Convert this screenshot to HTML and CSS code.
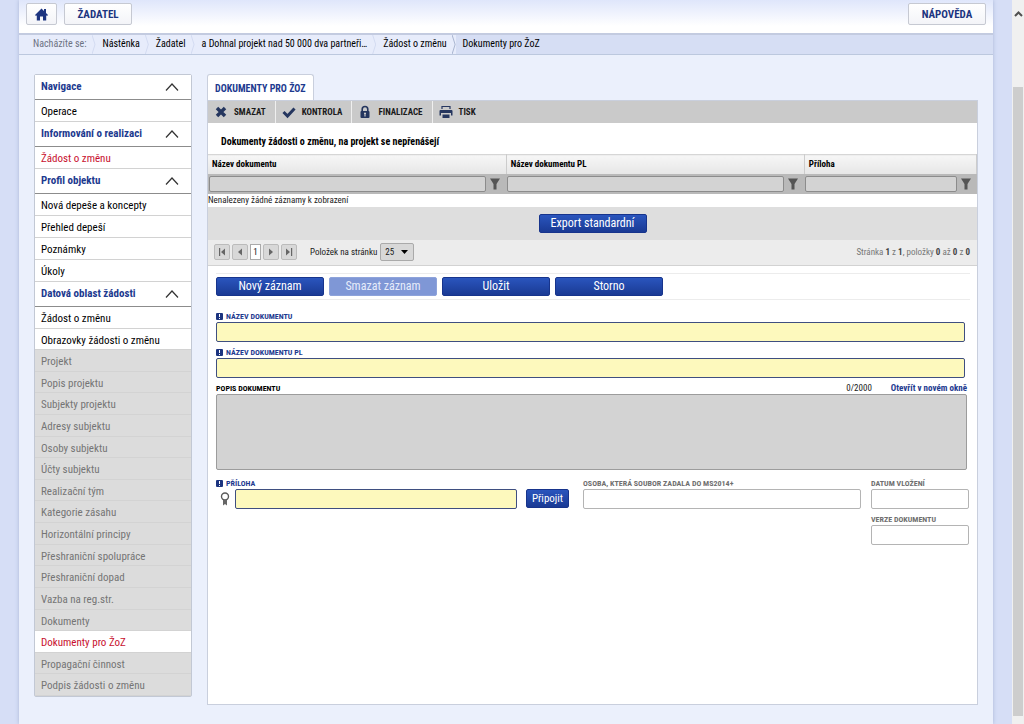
FILE: index.html
```html
<!DOCTYPE html>
<html lang="cs">
<head>
<meta charset="utf-8">
<title>Dokumenty pro ŽoZ</title>
<link rel="stylesheet" href="styles.css">
</head>
<body>
<div class="page">
  <header class="topbar">
    <button class="top-btn top-btn--home" type="button" aria-label="Domů">
      <svg width="13" height="13" viewBox="0 0 13 13"><path fill="#1c3480" d="M6.500 0.500L9 3V1h2v4l2 2-1 1-0.800-0.700V12.500H8V8.500H5v4H1.800V7.300L1 8 0 7z"/></svg>
    </button>
    <button class="top-btn top-btn--main" type="button">ŽADATEL</button>
    <button class="top-btn top-btn--help" type="button">NÁPOVĚDA</button>
  </header>
  <nav class="crumbs" aria-label="Drobečková navigace">
    <span class="crumb crumb--label">Nacházíte se:</span>
    <a class="crumb" href="#">Nástěnka</a>
    <a class="crumb" href="#">Žadatel</a>
    <a class="crumb" href="#">a Dohnal projekt nad 50 000 dva partneři…</a>
    <a class="crumb crumb--end" href="#">Žádost o změnu</a>
    <span class="crumb crumb--current">Dokumenty pro ŽoZ</span>
  </nav>
  <main class="main">
    <nav class="side" aria-label="Navigace">
      <button class="side-head" type="button">Navigace<svg width="14" height="8" viewBox="0 0 14 8"><path d="M1 7.500L7 1l6 6.500"/></svg></button>
      <ul class="side-list"><li><a href="#">Operace</a></li></ul>
      <button class="side-head" type="button">Informování o realizaci<svg width="14" height="8" viewBox="0 0 14 8"><path d="M1 7.500L7 1l6 6.500"/></svg></button>
      <ul class="side-list"><li class="is-active"><a href="#">Žádost o změnu</a></li></ul>
      <button class="side-head" type="button">Profil objektu<svg width="14" height="8" viewBox="0 0 14 8"><path d="M1 7.500L7 1l6 6.500"/></svg></button>
      <ul class="side-list">
        <li><a href="#">Nová depeše a koncepty</a></li>
        <li><a href="#">Přehled depeší</a></li>
        <li><a href="#">Poznámky</a></li>
        <li><a href="#">Úkoly</a></li>
      </ul>
      <button class="side-head" type="button">Datová oblast žádosti<svg width="14" height="8" viewBox="0 0 14 8"><path d="M1 7.500L7 1l6 6.500"/></svg></button>
      <ul class="side-list side-list--long">
        <li><a href="#">Žádost o změnu</a></li>
        <li><a href="#">Obrazovky žádosti o změnu</a></li>
        <li class="is-off"><a href="#">Projekt</a></li>
        <li class="is-off"><a href="#">Popis projektu</a></li>
        <li class="is-off"><a href="#">Subjekty projektu</a></li>
        <li class="is-off"><a href="#">Adresy subjektu</a></li>
        <li class="is-off"><a href="#">Osoby subjektu</a></li>
        <li class="is-off"><a href="#">Účty subjektu</a></li>
        <li class="is-off"><a href="#">Realizační tým</a></li>
        <li class="is-off"><a href="#">Kategorie zásahu</a></li>
        <li class="is-off"><a href="#">Horizontální principy</a></li>
        <li class="is-off"><a href="#">Přeshraniční spolupráce</a></li>
        <li class="is-off"><a href="#">Přeshraniční dopad</a></li>
        <li class="is-off"><a href="#">Vazba na reg.str.</a></li>
        <li class="is-off"><a href="#">Dokumenty</a></li>
        <li class="is-active"><a href="#">Dokumenty pro ŽoZ</a></li>
        <li class="is-off"><a href="#">Propagační činnost</a></li>
        <li class="is-off"><a href="#">Podpis žádosti o změnu</a></li>
      </ul>
    </nav>
    <section class="content">
      <h1 class="tab">DOKUMENTY PRO ŽOZ</h1>
      <div class="panel">
        <div class="tools">
          <button class="tool" type="button"><svg width="14" height="14" viewBox="0 0 14 14"><path d="M3 3l8 8M11 3l-8 8" stroke="#25365f" stroke-width="3.500"/></svg>SMAZAT</button>
          <button class="tool" type="button"><svg width="14" height="14" viewBox="0 0 14 14"><path d="M1.500 7l4 4L12.500 3.500" fill="none" stroke="#25365f" stroke-width="3"/></svg>KONTROLA</button>
          <button class="tool" type="button"><svg width="14" height="14" viewBox="0 0 14 14"><path d="M4.200 7V4.300a2.800 2.800 0 0 1 5.600 0V7" fill="none" stroke="#25365f" stroke-width="1.600"/><rect x="2.500" y="6" width="9" height="7" rx="1" fill="#25365f"/><path d="M7 7.500v4M6 8.500h2" stroke="#cacaca" stroke-width="1.200"/></svg>FINALIZACE</button>
          <button class="tool" type="button"><svg width="14" height="14" viewBox="0 0 14 14"><path d="M3 4V1.500h8V4" fill="none" stroke="#25365f" stroke-width="1.200"/><path fill="#25365f" d="M1.500 5h11a1 1 0 0 1 1 1v4.500H12V8H2v2.500H.5V6a1 1 0 0 1 1-1zM3.500 9.500h7V13h-7z"/></svg>TISK</button>
        </div>
        <h2 class="title">Dokumenty žádosti o změnu, na projekt se nepřenášejí</h2>
        <table class="grid">
          <thead>
            <tr><th class="col-wide">Název dokumentu</th><th class="col-wide">Název dokumentu PL</th><th>Příloha</th></tr>
          </thead>
          <tbody>
            <tr class="filters">
              <td><div class="filter"><input type="text" aria-label="Filtr Název dokumentu"><button type="button" aria-label="Filtrovat"><svg width="10" height="12" viewBox="0 0 10 12"><path d="M0 0.500h10L6.500 6v5.500h-3V6z"/></svg></button></div></td>
              <td><div class="filter"><input type="text" aria-label="Filtr Název dokumentu PL"><button type="button" aria-label="Filtrovat"><svg width="10" height="12" viewBox="0 0 10 12"><path d="M0 0.500h10L6.500 6v5.500h-3V6z"/></svg></button></div></td>
              <td><div class="filter"><input type="text" aria-label="Filtr Příloha"><button type="button" aria-label="Filtrovat"><svg width="10" height="12" viewBox="0 0 10 12"><path d="M0 0.500h10L6.500 6v5.500h-3V6z"/></svg></button></div></td>
            </tr>
            <tr><td class="empty" colspan="3">Nenalezeny žádné záznamy k zobrazení</td></tr>
          </tbody>
        </table>
        <div class="export"><button class="btn" type="button">Export standardní</button></div>
        <div class="pager">
          <div class="pages">
            <button class="page-btn" type="button" aria-label="První"><svg width="8" height="8" viewBox="0 0 8 8"><path d="M1 0h1.200v8H1zM7 0.500v7L3 4z"/></svg></button>
            <button class="page-btn" type="button" aria-label="Předchozí"><svg width="8" height="8" viewBox="0 0 8 8"><path d="M6 0.500v7L2 4z"/></svg></button>
            <span class="page-now">1</span>
            <button class="page-btn" type="button" aria-label="Další"><svg width="8" height="8" viewBox="0 0 8 8"><path d="M2 0.500v7L6 4z"/></svg></button>
            <button class="page-btn" type="button" aria-label="Poslední"><svg width="8" height="8" viewBox="0 0 8 8"><path d="M6 0h1.200v8H6zM1 0.500v7L5 4z"/></svg></button>
          </div>
          <label for="size">Položek na stránku</label>
          <div class="select"><select id="size"><option>25</option></select><svg width="7" height="4" viewBox="0 0 7 4"><path d="M0 0h7L3.500 4z"/></svg></div>
          <p class="range">Stránka <b>1</b> z <b>1</b>, položky <b>0</b> až <b>0</b> z <b>0</b></p>
        </div>
        <div class="actions">
          <button class="btn" type="button">Nový záznam</button>
          <button class="btn" type="button" disabled>Smazat záznam</button>
          <button class="btn" type="button">Uložit</button>
          <button class="btn" type="button">Storno</button>
        </div>
        <form class="form">
          <div class="field field--req">
            <label for="name"><svg width="7" height="7" viewBox="0 0 7 7"><rect width="7" height="7" rx="1" fill="#1c3480"/><path d="M3.500 1v3M3.500 5v1" stroke="#fff"/></svg>NÁZEV DOKUMENTU</label>
            <input id="name" type="text">
          </div>
          <div class="field field--req">
            <label for="namepl"><svg width="7" height="7" viewBox="0 0 7 7"><rect width="7" height="7" rx="1" fill="#1c3480"/><path d="M3.500 1v3M3.500 5v1" stroke="#fff"/></svg>NÁZEV DOKUMENTU PL</label>
            <input id="namepl" type="text">
          </div>
          <div class="field field--area">
            <div class="area-head"><label for="desc">POPIS DOKUMENTU</label><span class="count">0/2000</span><a href="#">Otevřít v novém okně</a></div>
            <textarea id="desc"></textarea>
          </div>
          <div class="row">
            <div class="field field--req field--file">
              <label for="file"><svg width="7" height="7" viewBox="0 0 7 7"><rect width="7" height="7" rx="1" fill="#1c3480"/><path d="M3.500 1v3M3.500 5v1" stroke="#fff"/></svg>PŘÍLOHA</label>
              <div class="file">
                <svg width="10" height="14" viewBox="0 0 10 14"><circle cx="5" cy="4.500" r="3.500" fill="none" stroke="#5a5a5a" stroke-width="1.400"/><path d="M3 8h4v5.500L5 12l-2 1.500z" fill="#666"/></svg>
                <input id="file" type="text">
                <button class="btn btn--small" type="button">Připojit</button>
              </div>
            </div>
            <div class="field field--person"><label for="person">OSOBA, KTERÁ SOUBOR ZADALA DO MS2014+</label><input id="person" type="text" readonly></div>
            <div class="stack">
              <div class="field"><label for="date">DATUM VLOŽENÍ</label><input id="date" type="text" readonly></div>
              <div class="field"><label for="ver">VERZE DOKUMENTU</label><input id="ver" type="text" readonly></div>
            </div>
          </div>
        </form>
      </div>
    </section>
  </main>
</div>
<div class="scroll" aria-hidden="true">
  <svg width="9" height="6" viewBox="0 0 9 6"><path d="M1 5l3.500-3.500L8 5"/></svg>
  <div class="thumb"></div>
</div>
</body>
</html>
```
FILE: styles.css
```css
* { box-sizing: border-box; }

body {
  margin: 0;
  min-height: 100vh;
  display: flex;
  background: #d6def6;
  color: #1a1a1a;
  font: 11px/14px "Roboto Condensed", "Liberation Sans Narrow", Roboto, sans-serif;
}

button, input, textarea, select { font: inherit; color: inherit; margin: 0; }
button { cursor: pointer; padding: 0; }
a { color: inherit; text-decoration: none; }
h1, h2, p, ul { margin: 0; padding: 0; }
ul { list-style: none; }

.page {
  flex: 1;
  min-width: 0;
  margin: 0 19px;
  display: flex;
  flex-direction: column;
  background: #ebf0fc;
  box-shadow: 0 0 4px #a9b6d6;
}

.topbar {
  display: flex;
  gap: 7px;
  height: 33px;
  padding: 3px 7px 8px;
  background: linear-gradient(#dfe6fb, #fff 26px);
}

.top-btn {
  padding-top: 2px;
  border: 1px solid #c6c9d2;
  border-radius: 2px;
  background: linear-gradient(#fff, #f3f4f8);
  color: #1c3480;
  font-weight: bold;
}
.top-btn svg { display: block; margin: 0 auto; }
.top-btn--home { width: 31px; padding-top: 0; }
.top-btn--main { width: 68px; }
.top-btn--help { width: 78px; margin-left: auto; }

.crumbs {
  display: flex;
  height: 22px;
  background: #d6def4;
  border-top: 2px solid #c3cbe0;
  border-bottom: 1px solid #bcc8de;
  font-size: 10px;
  line-height: 18px;
}
.crumb {
  display: flex;
  padding: 0 7px;
  background: #e7ecfb;
  color: #000;
}
.crumb--label { padding-left: 14px; color: #6d7383; }
.crumb--current { background: none; }
.crumb:not(.crumb--current)::after {
  content: "";
  width: 4px;
  margin: 0 -7px 0 5px;
  background: #d3dbf1;
  clip-path: polygon(0 0, 25% 0, 100% 50%, 25% 100%, 0 100%, 75% 50%);
}
.crumb.crumb--end::after { background: #a9b5d0; }

.main {
  flex: 1;
  display: flex;
  align-items: flex-start;
  gap: 15px;
  padding: 19px 15px;
}

.side {
  width: 158px;
  border: 1px solid #c2c8d4;
  border-radius: 2px;
  background: #fff;
}
.side-head {
  display: flex;
  align-items: center;
  justify-content: space-between;
  width: 100%;
  height: 25px;
  padding: 0 12px 0 6px;
  border: 0;
  border-bottom: 1px solid #8c8c8c;
  background: #fff;
  color: #1d3a8f;
  font-weight: bold;
}
.side-head path { fill: none; stroke: #333; stroke-width: 1.2; }
.side-list { display: grid; grid-auto-rows: minmax(min-content, 1fr); color: #000; }
.side-list li { border-bottom: 1px solid #d2d2d2; }
.side-list a { display: block; padding: 5px 6px 2px; }
.side-list--long { min-height: 389px; }
.side-list--long a { padding-bottom: 1px; }
.side-list .is-off { background: #dcdcdc; color: #757575; border-color: #d3d3d3; }
.side-list .is-active { color: #c8102e; }

.content {
  flex: 1;
  min-width: 0;
  align-self: stretch;
  display: flex;
  flex-direction: column;
}
.tab {
  align-self: flex-start;
  padding: 7px 7px 4px;
  border: 1px solid #c9cfdd;
  border-bottom: 0;
  border-radius: 3px 3px 0 0;
  background: #fff;
  color: #1d3a8f;
  font-size: 10px;
  line-height: 14px;
}
.panel { flex: 1; border: 1px solid #c9cfdd; background: #fff; }

.tools { display: flex; height: 22px; background: #cacaca; }
.tool {
  display: flex;
  align-items: center;
  gap: 6px;
  padding: 0 9px 0 6px;
  border: 0;
  border-right: 1px solid #efefef;
  background: none;
  font-size: 9px;
  font-weight: bold;
}
.tool:last-child { border: 0; }

.title { padding: 12px 13px 5px; color: #000; font-size: 10px; line-height: 14px; }

.grid { width: 100%; border-collapse: collapse; table-layout: fixed; }
.grid th {
  height: 19px;
  padding: 0 4px;
  border-top: 1px solid #d6d6d6;
  border-right: 1px solid #ccc;
  background: linear-gradient(#f6f6f6, #e6e6e6);
  color: #000;
  font-size: 9px;
  text-align: left;
}
.col-wide { width: 38.8%; }
.grid td { padding: 0; }
.filters { background: #b9b9b9; }
.filter { display: flex; align-items: center; height: 20px; padding: 0 2px 0 1px; }
.filter input {
  flex: 1;
  min-width: 0;
  height: 16px;
  border: 1px solid #8c8c8c;
  border-radius: 2px;
  background: #d3d3d3;
}
.filter button { width: 18px; border: 0; background: none; line-height: 0; }
.filter path { fill: #555; }
.grid .empty { padding: 0; font-size: 9px; line-height: 13px; }

.export {
  padding: 7px 0;
  background: #dedede;
  text-align: center;
  line-height: 0;
}
.btn {
  width: 108px;
  height: 19px;
  border: 1px solid #17348c;
  border-radius: 2px;
  background: linear-gradient(#2a55bd, #1a3a94);
  color: #fff;
  font-size: 12px;
  line-height: 17px;
}
.btn:disabled { border-color: #8ea3da; background: #7f97d6; color: #e6ecfa; }
.btn--small { width: 43px; font-size: 11px; }

.pager {
  display: flex;
  align-items: center;
  gap: 3px;
  height: 26px;
  padding: 0 7px 0 6px;
  border-bottom: 1px solid #d2d2d2;
  background: #ececec;
  font-size: 9px;
}
.pages { display: flex; gap: 2px; margin-right: 10px; }
.page-btn {
  width: 16px;
  height: 16px;
  border: 1px solid #bbb;
  border-radius: 2px;
  background: #d8d8d8;
  line-height: 0;
}
.page-btn path { fill: #666; }
.page-now { width: 11px; border: 1px solid #aaa; background: #fff; text-align: center; }
.select { display: flex; align-items: center; position: relative; }
.select select {
  appearance: none;
  width: 34px;
  height: 18px;
  padding: 0 4px;
  border: 1px solid #aaa;
  border-radius: 2px;
  background: #d8d8d8;
}
.select svg { position: absolute; right: 6px; pointer-events: none; }
.range { margin-left: auto; color: #777; }
.range b { color: #444; }

.actions {
  display: flex;
  gap: 5px;
  margin: 7px 7px 0 8px;
  padding: 3px 0;
  border: 1px solid #ececec;
  border-width: 1px 0;
}

.form { padding: 11px 8px 0; }
.field { display: flex; flex-direction: column; margin-bottom: 5px; }
.field label {
  display: flex;
  align-items: center;
  gap: 3px;
  color: #6f6f6f;
  font-size: 8px;
  line-height: 11px;
  font-weight: bold;
}
.field input {
  width: 100%;
  min-width: 0;
  height: 20px;
  border: 1px solid #b4b4b4;
  border-radius: 2px;
  background: #fff;
}
.field--req label { color: #1d3a8f; }
.field--req input { border-color: #3f4f80; background: #fdf9bd; }
.form > .field--req { margin-right: 4px; }
.field--area { margin: 0 2px 8px 0; }
.area-head { display: flex; gap: 19px; font-size: 9px; line-height: 11px; }
.area-head label { margin-right: auto; color: #000; }
.area-head a { color: #1d3a8f; font-weight: bold; }
.field textarea {
  display: block;
  width: 100%;
  height: 76px;
  border: 1px solid #9c9c9c;
  border-radius: 2px;
  background: #d3d3d3;
  resize: none;
}
.row { display: flex; align-items: flex-start; }
.field--file { flex: 353; margin-right: 14px; }
.file { display: flex; align-items: center; padding-left: 4px; }
.file input { flex: 1; margin: 0 9px 0 5px; }
.field--person { flex: 278; margin-right: 10px; }
.stack { width: 98px; }

.scroll {
  display: flex;
  flex-direction: column;
  width: 12px;
  height: 100vh;
  padding: 11px 1px 8px;
  background: #f0f0f0;
}
.scroll svg { margin: 0 auto; flex: none; }
.scroll path { fill: none; stroke: #505050; stroke-width: 2; }
.thumb { flex: 1; margin-top: 70px; background: #cdcdcd; }
```
